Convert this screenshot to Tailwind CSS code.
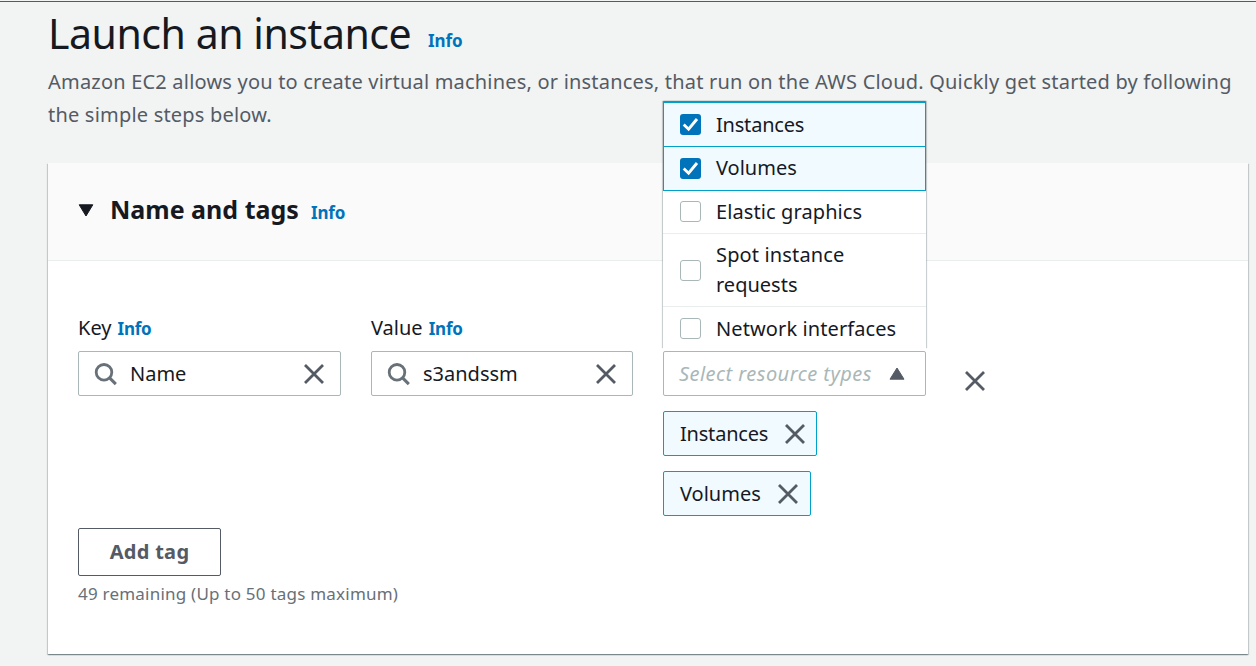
<!DOCTYPE html>
<html lang="en">
<head>
<meta charset="utf-8">
<title>Launch an instance</title>
<script src="https://cdn.jsdelivr.net/npm/@tailwindcss/browser@4"></script>
</head>
<body class="h-[666px] overflow-hidden border-t border-[#f2f3f3] bg-[#f2f3f3] font-['Noto_Sans','Open_Sans',sans-serif] text-[20px] text-[#16191f]">
<svg class="hidden">
  <symbol id="close" viewBox="0 0 20 20"><path d="M1 1 19 19M19 1 1 19" fill="none" stroke="#545b64" stroke-width="2.8"/></symbol>
  <symbol id="search" viewBox="0 0 24 24"><circle cx="10" cy="10.3" r="7.8" fill="none" stroke="#687078" stroke-width="2.8"/><path d="M15.6 15.9 21.8 22.1" stroke="#687078" stroke-width="3"/></symbol>
  <symbol id="check" viewBox="0 0 21 21"><path d="M3.7 10.5 8.6 15.2 17 5" fill="none" stroke="#fff" stroke-width="2.9"/></symbol>
</svg>
<div class="h-px bg-[#545b64]"></div>
<header class="h-[161px] pl-12">
  <div class="flex h-[63px] items-baseline">
    <h1 class="w-[380px] whitespace-nowrap text-[41px] leading-[62px] tracking-[-0.45px]"><span>Launch an instance</span></h1>
    <a class="-translate-y-[2px] whitespace-nowrap text-[17px] font-bold leading-6 tracking-[-0.1px] text-[#0073bb]"><span>Info</span></a>
  </div>
  <p class="whitespace-nowrap text-[20px] leading-[33px] tracking-[0.2px] text-[#545b64]"><span>Amazon EC2 allows you to create virtual machines, or instances, that run on the AWS Cloud. Quickly get started by following</span><br><span>the simple steps below.</span></p>
</header>
<main class="ml-12 h-[491px] w-[1200px] bg-white shadow-[0_1px_1px_0_rgba(0,28,36,0.3),1px_1px_1px_0_rgba(0,28,36,0.15),-1px_1px_1px_0_rgba(0,28,36,0.15)]">
  <div class="flex h-[98px] items-baseline border-b border-[#eaeded] bg-[#fafafa] pl-[30px]">
    <svg class="mr-4 h-[13px] w-4 shrink-0 -translate-y-[2px]" viewBox="0 0 16 13"><path d="M1.2.8h13.6L8 12Z" fill="#16191f" stroke="#16191f" stroke-linejoin="round"/></svg>
    <h2 class="w-[201px] whitespace-nowrap text-[25px] font-bold leading-[92px]"><span>Name and tags</span></h2>
    <a class="whitespace-nowrap text-[17px] font-bold tracking-[-0.2px] text-[#0073bb]"><span>Info</span></a>
  </div>
  <div class="pl-[30px] pt-[52px]">
    <div class="flex items-start">
      <div class="w-[293px]">
        <div class="flex h-[38px] items-baseline gap-[6px] whitespace-nowrap leading-[30px]"><span>Key</span><a class="text-[17px] font-bold tracking-[-0.2px] text-[#0073bb]">Info</a></div>
        <div class="flex h-[45px] w-[263px] items-center rounded-[2px] border border-[#aab7b8] pl-[15px] pr-4">
          <svg class="mr-3 size-6"><use href="#search"/></svg><span class="whitespace-nowrap">Name</span><svg class="ml-auto size-5"><use href="#close"/></svg>
        </div>
      </div>
      <div class="w-[292px]">
        <div class="flex h-[38px] items-baseline gap-[6px] whitespace-nowrap leading-[30px]"><span>Value</span><a class="text-[17px] font-bold tracking-[-0.2px] text-[#0073bb]">Info</a></div>
        <div class="flex h-[45px] w-[262px] items-center rounded-[2px] border border-[#aab7b8] pl-[15px] pr-4">
          <svg class="mr-3 size-6"><use href="#search"/></svg><span class="whitespace-nowrap">s3andssm</span><svg class="ml-auto size-5"><use href="#close"/></svg>
        </div>
      </div>
      <div class="relative w-[263px] pt-[38px]">
        <div class="flex h-[45px] items-center justify-between rounded-[2px] border border-[#aab7b8] pl-[15px] pr-5">
          <span class="whitespace-nowrap italic tracking-[0.46px] text-[#aab7b8]">Select resource types</span>
          <svg class="h-[13px] w-4" viewBox="0 0 16 13"><path d="M1 12.2h14L8 1Z" fill="#545b64" stroke="#545b64" stroke-linejoin="round"/></svg>
        </div>
        <div class="mt-[15px] flex h-[45px] w-[154px] items-center justify-between rounded-[2px] border border-[#00a1c9] bg-[#f1faff] pl-4 pr-[11px]"><span class="tracking-[-0.2px]">Instances</span><svg class="size-5"><use href="#close"/></svg></div>
        <div class="mt-[15px] flex h-[45px] w-[148px] items-center justify-between rounded-[2px] border border-[#00a1c9] bg-[#f1faff] pl-4 pr-3"><span>Volumes</span><svg class="size-5"><use href="#close"/></svg></div>
        <ul class="absolute left-0 top-[-211px] h-[247px] w-[263px] bg-white leading-[30px] shadow-[0_-1px_1px_0_rgba(0,28,36,0.4),1px_-1px_1px_0_rgba(0,28,36,0.15),-1px_-1px_1px_0_rgba(0,28,36,0.15)]">
          <li class="flex h-[45px] items-center border border-[#00a1c9] bg-[#f1faff] pl-4"><svg class="mr-[15px] size-[21px] rounded-[3px] bg-[#0073bb]"><use href="#check"/></svg><span class="tracking-[-0.2px]">Instances</span></li>
          <li class="-mt-px flex h-[45px] items-center border border-[#00a1c9] bg-[#f1faff] pl-4"><svg class="mr-[15px] size-[21px] rounded-[3px] bg-[#0073bb]"><use href="#check"/></svg><span class="-mt-[2px]">Volumes</span></li>
          <li class="flex h-[43px] items-center border-b border-[#eaeded] pl-[17px]"><i class="mb-px mr-[15px] size-[21px] rounded-[3px] border-[1.5px] border-[#aab7b8] bg-white"></i><span class="tracking-[0.1px]">Elastic graphics</span></li>
          <li class="flex h-[73px] items-center border-b border-[#eaeded] pl-[17px]"><i class="mr-[15px] size-[21px] rounded-[3px] border-[1.5px] border-[#aab7b8] bg-white"></i><span><span class="tracking-[0.15px]">Spot instance</span><br><span>requests</span></span></li>
          <li class="flex h-[43px] items-center pl-[17px]"><i class="mr-[15px] size-[21px] rounded-[3px] border-[1.5px] border-[#aab7b8] bg-white"></i><span class="tracking-[0.1px]">Network interfaces</span></li>
        </ul>
      </div>
      <svg class="ml-[39px] mt-[58px] size-5"><use href="#close"/></svg>
    </div>
    <button class="mt-3 flex h-12 w-[143px] items-center justify-center rounded-[2px] border border-[#545b64] bg-white text-[20px] font-bold tracking-[0.3px] text-[#545b64]"><span>Add tag</span></button>
    <p class="mt-[6px] whitespace-nowrap text-[17px] leading-6 tracking-[0.22px] text-[#687078]"><span>49 remaining (Up to 50 tags maximum)</span></p>
  </div>
</main>
</body>
</html>
